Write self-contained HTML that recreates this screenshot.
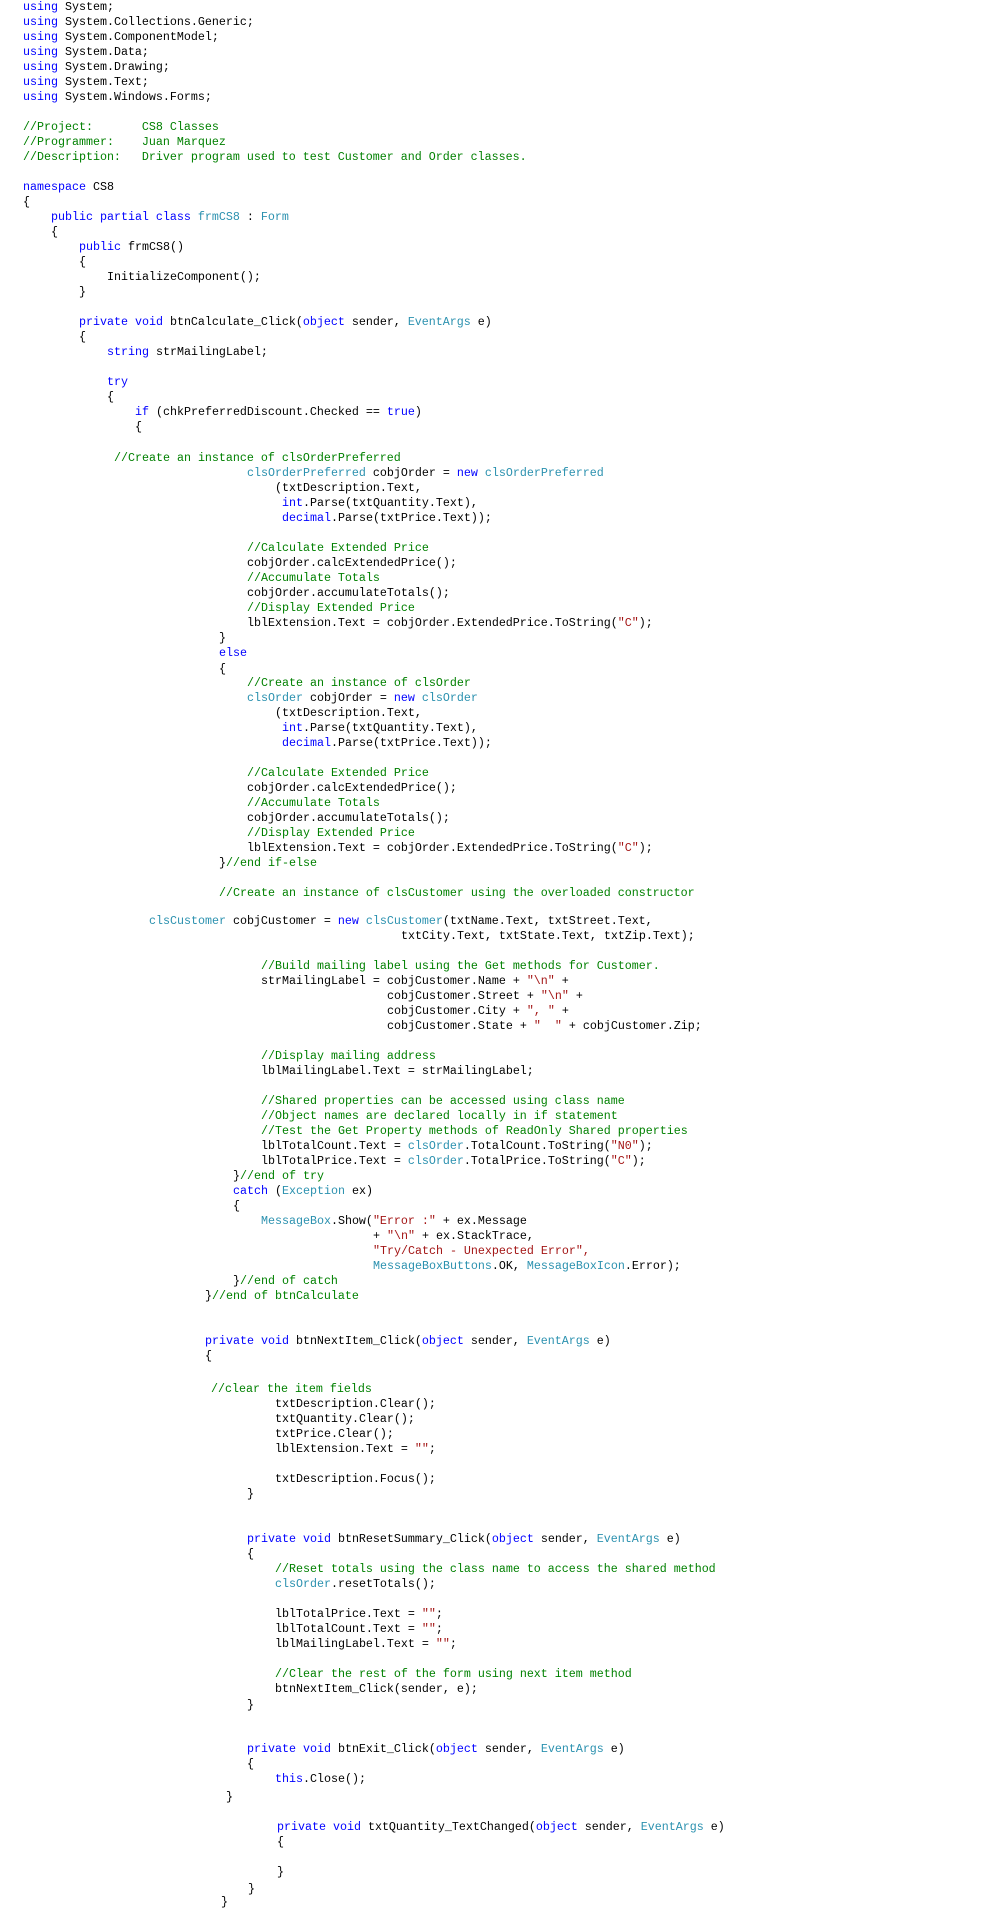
<!DOCTYPE html>
<html><head><meta charset="utf-8"><style>
html,body{margin:0;padding:0;background:#fff;}
body{width:1000px;height:1913px;position:relative;overflow:hidden;}
.l{position:absolute;height:15px;line-height:15px;white-space:pre;font-family:"Liberation Mono",monospace;font-size:11.67px;color:#000;}
.k{color:#0000ff}.t{color:#2b91af}.c{color:#008000}.s{color:#a31515}
</style></head><body>
<div class="l" style="left:23px;top:0px"><span class="k">using</span> System;</div>
<div class="l" style="left:23px;top:15px"><span class="k">using</span> System.Collections.Generic;</div>
<div class="l" style="left:23px;top:30px"><span class="k">using</span> System.ComponentModel;</div>
<div class="l" style="left:23px;top:45px"><span class="k">using</span> System.Data;</div>
<div class="l" style="left:23px;top:60px"><span class="k">using</span> System.Drawing;</div>
<div class="l" style="left:23px;top:75px"><span class="k">using</span> System.Text;</div>
<div class="l" style="left:23px;top:90px"><span class="k">using</span> System.Windows.Forms;</div>
<div class="l c" style="left:23px;top:120px">//Project:       CS8 Classes</div>
<div class="l c" style="left:23px;top:135px">//Programmer:    Juan Marquez</div>
<div class="l c" style="left:23px;top:150px">//Description:   Driver program used to test Customer and Order classes.</div>
<div class="l" style="left:23px;top:180px"><span class="k">namespace</span> CS8</div>
<div class="l" style="left:23px;top:195px">{</div>
<div class="l" style="left:51px;top:210px"><span class="k">public partial class</span> <span class="t">frmCS8</span> : <span class="t">Form</span></div>
<div class="l" style="left:51px;top:225px">{</div>
<div class="l" style="left:79px;top:240px"><span class="k">public</span> frmCS8()</div>
<div class="l" style="left:79px;top:255px">{</div>
<div class="l" style="left:107px;top:270px">InitializeComponent();</div>
<div class="l" style="left:79px;top:285px">}</div>
<div class="l" style="left:79px;top:315px"><span class="k">private void</span> btnCalculate_Click(<span class="k">object</span> sender, <span class="t">EventArgs</span> e)</div>
<div class="l" style="left:79px;top:330px">{</div>
<div class="l" style="left:107px;top:345px"><span class="k">string</span> strMailingLabel;</div>
<div class="l" style="left:107px;top:375px"><span class="k">try</span></div>
<div class="l" style="left:107px;top:390px">{</div>
<div class="l" style="left:135px;top:405px"><span class="k">if</span> (chkPreferredDiscount.Checked == <span class="k">true</span>)</div>
<div class="l" style="left:135px;top:420px">{</div>
<div class="l c" style="left:114px;top:451px">//Create an instance of clsOrderPreferred</div>
<div class="l" style="left:247px;top:466px"><span class="t">clsOrderPreferred</span> cobjOrder = <span class="k">new</span> <span class="t">clsOrderPreferred</span></div>
<div class="l" style="left:275px;top:481px">(txtDescription.Text,</div>
<div class="l" style="left:282px;top:496px"><span class="k">int</span>.Parse(txtQuantity.Text),</div>
<div class="l" style="left:282px;top:511px"><span class="k">decimal</span>.Parse(txtPrice.Text));</div>
<div class="l c" style="left:247px;top:541px">//Calculate Extended Price</div>
<div class="l" style="left:247px;top:556px">cobjOrder.calcExtendedPrice();</div>
<div class="l c" style="left:247px;top:571px">//Accumulate Totals</div>
<div class="l" style="left:247px;top:586px">cobjOrder.accumulateTotals();</div>
<div class="l c" style="left:247px;top:601px">//Display Extended Price</div>
<div class="l" style="left:247px;top:616px">lblExtension.Text = cobjOrder.ExtendedPrice.ToString(<span class="s">"C"</span>);</div>
<div class="l" style="left:219px;top:631px">}</div>
<div class="l k" style="left:219px;top:646px">else</div>
<div class="l" style="left:219px;top:662px">{</div>
<div class="l c" style="left:247px;top:676px">//Create an instance of clsOrder</div>
<div class="l" style="left:247px;top:691px"><span class="t">clsOrder</span> cobjOrder = <span class="k">new</span> <span class="t">clsOrder</span></div>
<div class="l" style="left:275px;top:706px">(txtDescription.Text,</div>
<div class="l" style="left:282px;top:721px"><span class="k">int</span>.Parse(txtQuantity.Text),</div>
<div class="l" style="left:282px;top:736px"><span class="k">decimal</span>.Parse(txtPrice.Text));</div>
<div class="l c" style="left:247px;top:766px">//Calculate Extended Price</div>
<div class="l" style="left:247px;top:781px">cobjOrder.calcExtendedPrice();</div>
<div class="l c" style="left:247px;top:796px">//Accumulate Totals</div>
<div class="l" style="left:247px;top:811px">cobjOrder.accumulateTotals();</div>
<div class="l c" style="left:247px;top:826px">//Display Extended Price</div>
<div class="l" style="left:247px;top:841px">lblExtension.Text = cobjOrder.ExtendedPrice.ToString(<span class="s">"C"</span>);</div>
<div class="l" style="left:219px;top:856px">}<span class="c">//end if-else</span></div>
<div class="l c" style="left:219px;top:886px">//Create an instance of clsCustomer using the overloaded constructor</div>
<div class="l" style="left:149px;top:914px"><span class="t">clsCustomer</span> cobjCustomer = <span class="k">new</span> <span class="t">clsCustomer</span>(txtName.Text, txtStreet.Text,</div>
<div class="l" style="left:401px;top:929px">txtCity.Text, txtState.Text, txtZip.Text);</div>
<div class="l c" style="left:261px;top:959px">//Build mailing label using the Get methods for Customer.</div>
<div class="l" style="left:261px;top:974px">strMailingLabel = cobjCustomer.Name + <span class="s">"\n"</span> +</div>
<div class="l" style="left:387px;top:989px">cobjCustomer.Street + <span class="s">"\n"</span> +</div>
<div class="l" style="left:387px;top:1004px">cobjCustomer.City + <span class="s">", "</span> +</div>
<div class="l" style="left:387px;top:1019px">cobjCustomer.State + <span class="s">"  "</span> + cobjCustomer.Zip;</div>
<div class="l c" style="left:261px;top:1049px">//Display mailing address</div>
<div class="l" style="left:261px;top:1064px">lblMailingLabel.Text = strMailingLabel;</div>
<div class="l c" style="left:261px;top:1094px">//Shared properties can be accessed using class name</div>
<div class="l c" style="left:261px;top:1109px">//Object names are declared locally in if statement</div>
<div class="l c" style="left:261px;top:1124px">//Test the Get Property methods of ReadOnly Shared properties</div>
<div class="l" style="left:261px;top:1139px">lblTotalCount.Text = <span class="t">clsOrder</span>.TotalCount.ToString(<span class="s">"N0"</span>);</div>
<div class="l" style="left:261px;top:1154px">lblTotalPrice.Text = <span class="t">clsOrder</span>.TotalPrice.ToString(<span class="s">"C"</span>);</div>
<div class="l" style="left:233px;top:1169px">}<span class="c">//end of try</span></div>
<div class="l" style="left:233px;top:1184px"><span class="k">catch</span> (<span class="t">Exception</span> ex)</div>
<div class="l" style="left:233px;top:1199px">{</div>
<div class="l" style="left:261px;top:1214px"><span class="t">MessageBox</span>.Show(<span class="s">"Error :"</span> + ex.Message</div>
<div class="l" style="left:373px;top:1229px">+ <span class="s">"\n"</span> + ex.StackTrace,</div>
<div class="l s" style="left:373px;top:1244px">"Try/Catch - Unexpected Error",</div>
<div class="l" style="left:373px;top:1259px"><span class="t">MessageBoxButtons</span>.OK, <span class="t">MessageBoxIcon</span>.Error);</div>
<div class="l" style="left:233px;top:1274px">}<span class="c">//end of catch</span></div>
<div class="l" style="left:205px;top:1289px">}<span class="c">//end of btnCalculate</span></div>
<div class="l" style="left:205px;top:1334px"><span class="k">private void</span> btnNextItem_Click(<span class="k">object</span> sender, <span class="t">EventArgs</span> e)</div>
<div class="l" style="left:205px;top:1349px">{</div>
<div class="l c" style="left:211px;top:1382px">//clear the item fields</div>
<div class="l" style="left:275px;top:1397px">txtDescription.Clear();</div>
<div class="l" style="left:275px;top:1412px">txtQuantity.Clear();</div>
<div class="l" style="left:275px;top:1427px">txtPrice.Clear();</div>
<div class="l" style="left:275px;top:1442px">lblExtension.Text = <span class="s">""</span>;</div>
<div class="l" style="left:275px;top:1472px">txtDescription.Focus();</div>
<div class="l" style="left:247px;top:1487px">}</div>
<div class="l" style="left:247px;top:1532px"><span class="k">private void</span> btnResetSummary_Click(<span class="k">object</span> sender, <span class="t">EventArgs</span> e)</div>
<div class="l" style="left:247px;top:1547px">{</div>
<div class="l c" style="left:275px;top:1562px">//Reset totals using the class name to access the shared method</div>
<div class="l" style="left:275px;top:1577px"><span class="t">clsOrder</span>.resetTotals();</div>
<div class="l" style="left:275px;top:1607px">lblTotalPrice.Text = <span class="s">""</span>;</div>
<div class="l" style="left:275px;top:1622px">lblTotalCount.Text = <span class="s">""</span>;</div>
<div class="l" style="left:275px;top:1637px">lblMailingLabel.Text = <span class="s">""</span>;</div>
<div class="l c" style="left:275px;top:1667px">//Clear the rest of the form using next item method</div>
<div class="l" style="left:275px;top:1682px">btnNextItem_Click(sender, e);</div>
<div class="l" style="left:247px;top:1698px">}</div>
<div class="l" style="left:247px;top:1742px"><span class="k">private void</span> btnExit_Click(<span class="k">object</span> sender, <span class="t">EventArgs</span> e)</div>
<div class="l" style="left:247px;top:1757px">{</div>
<div class="l" style="left:275px;top:1772px"><span class="k">this</span>.Close();</div>
<div class="l" style="left:226px;top:1790px">}</div>
<div class="l" style="left:277px;top:1820px"><span class="k">private void</span> txtQuantity_TextChanged(<span class="k">object</span> sender, <span class="t">EventArgs</span> e)</div>
<div class="l" style="left:277px;top:1835px">{</div>
<div class="l" style="left:277px;top:1865px">}</div>
<div class="l" style="left:248px;top:1882px">}</div>
<div class="l" style="left:221px;top:1895px">}</div>
</body></html>
